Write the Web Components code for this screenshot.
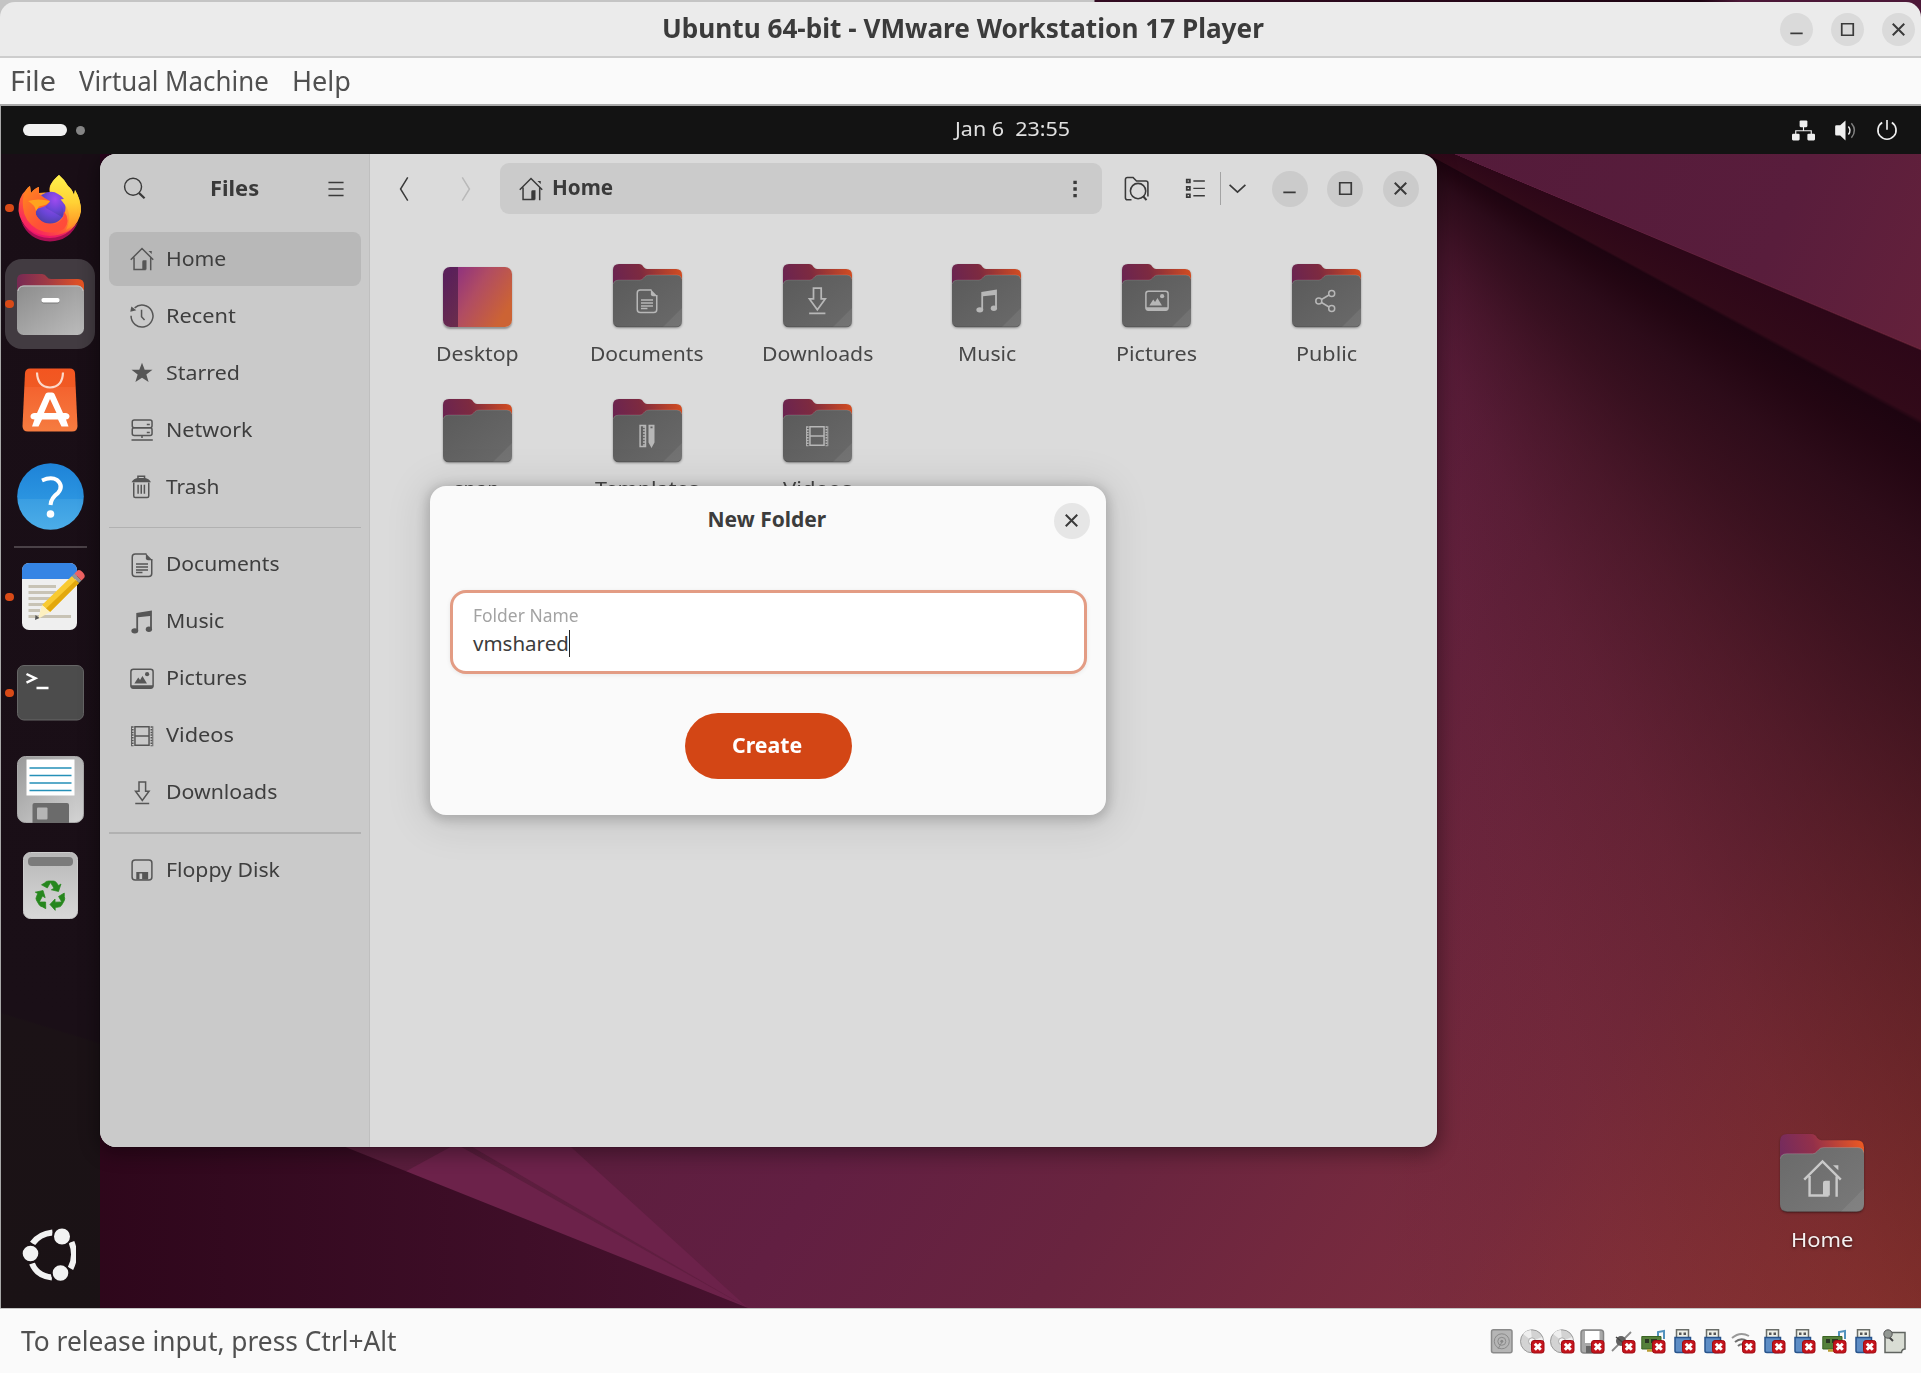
<!DOCTYPE html>
<html lang="en">
<head>
<meta charset="utf-8">
<title>Ubuntu 64-bit - VMware Workstation 17 Player</title>
<style>
html,body{margin:0;padding:0}
body{width:1921px;height:1373px;overflow:hidden;font-family:"Noto Sans","Open Sans",sans-serif;background:#fafafa}
</style>
</head>
<body>
<vm-player></vm-player>
<script>
const define = (name, html, setup) => {
  const tpl = document.createElement('template');
  customElements.define(name, class extends HTMLElement {
    constructor(){ super(); this.attachShadow({mode:'open'}); }
    connectedCallback(){
      if (this.ready) return;
      this.ready = true;
      tpl.innerHTML = typeof html === 'function' ? html(this) : html;
      this.shadowRoot.append(document.importNode(tpl.content, true));
      if (setup) setup(this);
    }
  });
};

/* Text condensed or widened to a given advance width */
define('ui-text', `<style>
:host{display:inline-block;white-space:nowrap;line-height:1.3;flex:none}
span{display:inline-block;transform-origin:0 50%;white-space:pre}
</style><span><slot></slot></span>`, el => {
  const s = el.shadowRoot.querySelector('span');
  const w = +el.getAttribute('w');
  if (w) {
    s.style.transform = `scaleX(${w / s.offsetWidth})`;
    el.style.width = w + 'px';
  }
});

/* Symbolic icons on a 16 unit grid */
const S = 'fill="none" stroke="currentColor"';
const icons = {
  home:`<path ${S} d="M.5 8.5 8 1l7.5 7.5M2.7 7v8h7.8M13.8 7.2v8.3"/><path fill="currentColor" d="M8.2 9.8q0-.9.9-.9h1.9V15H8.2zM12.3 2.6h2.2v2z"/>`,
  recent:`<path ${S} d="M.7 7.9A7.3 7.3 0 1 0 3.1 2.6M7.7 3.8v4.7l2 2.2"/><path fill="currentColor" d="M.2 5.2.9 1.6l3.3 2.5z"/>`,
  star:`<path fill="currentColor" d="m8 1.1 1.8 4.7 5.2.1-4.100 3.100 1.500 5L8 11.200l-4.400 2.800 1.500-5L1 5.900l5.200-.1z"/>`,
  network:`<g ${S}><rect x="1.5" y="1.3" width="13.2" height="5.2" rx="1.3"/><rect x="1.5" y="6.5" width="13.2" height="5.2" rx="1.3"/><path d="M1 14.7h14.2M8 11.7v1.6M11.2 4.4h2M11.2 9.6h2"/></g>`,
  trash:`<path ${S} d="M2.5 5v9q0 1 1 1h8q1 0 1-1V5M5.3 2.6V.9h4.4v1.7M5.4 6.5v6M7.5 6.5v6M9.6 6.5v6"/><path fill="currentColor" d="M1 4.9q1.5-2.6 4-2.9h5q2.5.3 4 2.9z"/>`,
  document:`<path ${S} d="M11 .6H3.5q-2 0-2 2v11q0 2 2 2h9q2 0 2-2V4M4 7.3h8M4 9.3h8M4 11.3h8M4 13h4.3"/><path fill="currentColor" d="M10.6.4 15 4.9h-3q-1.4 0-1.4-1.4z"/>`,
  music:`<path fill="currentColor" d="M4.2 2 14.6.3v12h-1.200V4l-8 .8v9.1H4.200z"/><ellipse cx="3.2" cy="13.9" rx="2.3" ry="1.8" fill="currentColor"/><ellipse cx="12.6" cy="12.8" rx="2.1" ry="1.8" fill="currentColor"/>`,
  picture:`<rect ${S} x=".6" y="1.5" width="14.8" height="12.6" rx="1.7"/><path fill="currentColor" d="M.6 12.1h14.8v1q0 1.4-1.4 1.4H2q-1.4 0-1.4-1.4zM2.9 11l2.6-4 1.2 1.6L8.300 6l3 5z"/><circle cx="11.4" cy="4.8" r="1.4" fill="currentColor"/>`,
  video:`<path ${S} d="M3.300 1.900h9.400v12.200H3.300zM3.300 8h9.400"/><path ${S} stroke-dasharray="1 .8" stroke-width="1.2" d="M1.8 1.500v13.300M14.300 1.500v13.300"/><path ${S} stroke-width=".6" d="M1 1.500v13.300M15.2 1.500v13.300"/>`,
  download:`<path ${S} d="M6 .7h4.400v6.100h2.300L8.200 13 3.700 6.800H6zM3.500 15h9.300"/>`,
  floppy:`<rect ${S} x="1.400" y="1.400" width="13.200" height="13.200" rx="2"/><path fill="currentColor" fill-rule="evenodd" d="M4.200 9.400h7.900v5H4.200zM6.300 10.300v3.700h1.800v-3.700z"/>`,
  template:`<path ${S} d="M3.400 1h3.600v14H3.400z"/><path ${S} stroke-dasharray="1 1" stroke-width="1.400" d="M6 1.500v13"/><path fill="currentColor" fill-rule="evenodd" d="M9 .5h4v11.800L11 16l-2-3.700zm1.300 1.200v1.200h1.400V1.700z"/>`,
  share:`<g ${S}><circle cx="3.200" cy="8" r="2"/><circle cx="11.800" cy="3" r="2"/><circle cx="11.800" cy="13" r="2"/><path d="m5 7 5-3M5 9l5 3"/></g>`,
  search:`<circle ${S} cx="7" cy="6.800" r="5.900"/><path ${S} stroke-width="1.500" d="m11.200 11.200 3.800 3.600"/>`,
  menu:`<path ${S} d="M2.500 3.300h11M2.500 8h11M2.500 12.700h11"/>`,
  back:`<path ${S} d="M10.500.2 5.700 8l4.800 7.800"/>`,
  forward:`<path ${S} d="M5.500.2 10.300 8l-4.800 7.800"/>`,
  dots:`<path fill="currentColor" d="M6.900 2.500h2.300v2.200H6.900zM6.900 6.900h2.300v2.200H6.900zM6.900 11.300h2.300v2.200H6.900z"/>`,
  find:`<g ${S}><path d="M4.800 15.200H2.200q-1.300 0-1.300-1.300V2.300Q.9 1 2.200 1h3.600L8 3.200h6q1.300 0 1.300 1.300v8.600"/><circle cx="9" cy="9.600" r="4.900"/><path stroke-width="1.300" d="m12.400 13.100 2 2.300"/></g>`,
  list:`<g ${S}><path stroke-width="1.200" d="M2.600 1.800h2.200v2H2.600zM2.600 6.900h2.200v2H2.600zM2.600 12h2.200v2H2.600z"/><path d="M7.200 2.800h8M7.200 7.900h8M7.200 13h8"/></g>`,
  down:`<path ${S} stroke-width="1.200" d="m2.500 5.500 5.500 5 5.500-5"/>`,
  minimize:`<path ${S} stroke-width="1.200" d="M3.700 10.700h8.600"/>`,
  maximize:`<path ${S} stroke-width="1.200" d="M4 4h8v8H4z"/>`,
  close:`<path ${S} stroke-width="1.400" d="m4 4 8 8M12 4l-8 8"/>`,
  wired:`<g fill="currentColor"><rect x="5.300" y="1" width="5.400" height="4.700" rx=".8"/><rect x="0" y="10.200" width="5.300" height="4.700" rx=".8"/><rect x="10.700" y="10.200" width="5.300" height="4.700" rx=".8"/></g><path ${S} stroke-width=".8" d="M8 5.500v2.700M2.600 10.500V8.200h10.800v2.300"/>`,
  volume:`<path fill="currentColor" d="M.8 5.300q0-.9.900-.9h2.600L8 1v14l-3.700-3.500H1.700q-.9 0-.9-.9z"/><path ${S} d="M10 5.200q2.300 2.800 0 5.600"/><path ${S} opacity=".5" d="M12.100 3q4.300 5 0 10"/>`,
  power:`<path ${S} stroke-width="1.200" d="M4.500 2.500a6.600 6.600 0 1 0 7 0M8 .8v7"/>`
};
define('ui-icon', el => `<style>:host{display:inline-flex;flex:none}svg{display:block;overflow:visible}</style>
<svg width="${el.getAttribute('size') || 24}" height="${el.getAttribute('size') || 24}" viewBox="0 0 16 16">${icons[el.getAttribute('name')]}</svg>`);

define('round-button', el => `<style>
:host{display:flex;align-items:center;justify-content:center;border-radius:50%;flex:none;width:36px;height:36px;background:#cbcbcb;color:#3a3a3a}
</style><ui-icon name="${el.getAttribute('icon')}" size="${el.getAttribute('size') || 23}"></ui-icon>`);

/* Folder with an optional emblem */
define('folder-icon', el => {
  const g = el.getAttribute('glyph'), desk = el.hasAttribute('bright');
  return `<style>:host{display:block;position:relative;width:69px;height:64px;flex:none}
svg{display:block;width:100%;height:100%;overflow:visible;filter:drop-shadow(0 1.500px 1px #0005)}
div{position:absolute;inset:11px 0 2px;display:flex;align-items:center;justify-content:center;color:${desk ? '#c9c9c9' : '#b7b7b7'}}</style>
<svg viewBox="0 0 69 64" preserveAspectRatio="none"><defs>
<linearGradient id="b" x1="0" y1=".3" x2="1" y2=".15"><stop offset="0" stop-color="${desk ? '#752b5d' : '#6b2450'}"/><stop offset=".4" stop-color="${desk ? '#93304a' : '#7d2a40'}"/><stop offset="1" stop-color="${desk ? '#ef5a22' : '#d44d20'}"/></linearGradient>
<linearGradient id="f" x1="0" y1="0" x2="1" y2="1"><stop offset="0" stop-color="${desk ? '#6a6a6a' : '#5a5a5a'}"/><stop offset="1" stop-color="${desk ? '#797979' : '#6a6a6a'}"/></linearGradient></defs>
<path fill="url(#b)" d="M0 40V6Q0 0 6 0H26Q29 0 30.500 3Q32 5 34 5H63Q69 5 69 11V40Z"/>
<path fill="url(#f)" d="M0 21Q0 16 5.500 16H27Q29 16 30.500 14L32 12.500Q33 11 36 11H64Q69 11 69 17V57Q69 63 63 63H6Q0 63 0 57Z"/>
<path fill="none" stroke="#fff" stroke-opacity=".16" stroke-width=".8" d="M.3 20Q1 16 5.500 16H27Q29 16 30.500 14L32 12.500Q33 11 36 11H64Q68 11 68.700 15"/>
<path fill="#fff" fill-opacity=".07" d="M69 44V57Q69 63 63 63H50Z"/><path fill="none" stroke="#0003" d="M2 61.500Q4 63 6 63H63Q66 63 67.500 61"/></svg>
${g ? `<div><ui-icon name="${g}" size="${el.getAttribute('gsize') || 24}"></ui-icon></div>` : ''}`;
});

define('desktop-tile', `<style>:host{display:block;width:69px;height:60px;margin-top:2.500px;margin-bottom:1.500px}
div{height:100%;border-radius:7px;background:linear-gradient(90deg,#3a163f99 15px,#0000 15px),linear-gradient(122deg,#8b2f82 10%,#b04c63 45%,#cc6334 85%);box-shadow:0 1.500px 2px #0005}</style><div></div>`);

define('file-item', el => `<style>
:host{display:flex;flex-direction:column;align-items:center;width:169.800px;height:135px;font-size:20.500px;color:#474747;flex:none}
ui-text{margin-top:11.500px}
</style><slot></slot><ui-text w="${el.getAttribute('w')}">${el.getAttribute('label')}</ui-text>`);

define('side-row', el => `<style>
:host{display:flex;align-items:center;height:54px;margin:0 8px 3px 9px;padding-left:21px;border-radius:8px;color:#565656;font-size:20.500px}
:host([active]){background:#b8b8b8}
ui-text{margin:-2px 0 0 12px;color:#3e3e3e}
</style><ui-icon name="${el.getAttribute('icon')}"></ui-icon><ui-text w="${el.getAttribute('w')}">${el.getAttribute('label')}</ui-text>`);

define('files-sidebar', `<style>
:host{display:flex;flex-direction:column;width:269px;background:#cacaca;border-right:1px solid #bfbfbf;flex:none}
header{display:flex;align-items:center;height:69px;padding:0 22px 0 23px;justify-content:space-between;margin-bottom:9px;color:#3a3a3a;font-weight:700;font-size:21px}
header ui-text{margin-left:-3px}
hr{border:0;height:1.500px;background:#b1b1b1;margin:9.500px 8px 9.500px 9px;width:252px}
</style>
<header><ui-icon name="search" size="23"></ui-icon><ui-text w="49">Files</ui-text><ui-icon name="menu" size="22"></ui-icon></header>
<side-row active icon="home" label="Home" w="60"></side-row>
<side-row icon="recent" label="Recent" w="70"></side-row>
<side-row icon="star" label="Starred" w="74"></side-row>
<side-row icon="network" label="Network" w="86"></side-row>
<side-row icon="trash" label="Trash" w="53"></side-row>
<hr>
<side-row icon="document" label="Documents" w="114"></side-row>
<side-row icon="music" label="Music" w="58"></side-row>
<side-row icon="picture" label="Pictures" w="81"></side-row>
<side-row icon="video" label="Videos" w="68"></side-row>
<side-row icon="download" label="Downloads" w="111"></side-row>
<hr>
<side-row icon="floppy" label="Floppy Disk" w="114"></side-row>`);

define('files-toolbar', `<style>
:host{display:flex;align-items:center;height:69px;color:#3a3a3a;padding-left:22px}
.fwd{color:#b9b9b9;margin-left:37.500px}
.path{display:flex;align-items:center;height:51px;width:602.500px;margin-left:22px;background:#cbcbcb;border-radius:9px;font-weight:700;font-size:21px;box-sizing:border-box;padding:0 15px 0 19px}
.path ui-text{margin:-1px auto 0 9.500px}
.find{margin-left:21.500px}.list{margin-left:34px}
i{width:1.500px;height:33px;background:#a3a3a3;margin-left:14px}
.down{margin-left:5px}
round-button{margin-left:19.600px}.first{margin-left:22.500px}
</style>
<ui-icon name="back"></ui-icon><ui-icon class="fwd" name="forward"></ui-icon>
<div class="path"><ui-icon name="home"></ui-icon><ui-text w="61">Home</ui-text><ui-icon name="dots"></ui-icon></div>
<ui-icon class="find" name="find" size="25"></ui-icon>
<ui-icon class="list" name="list" size="23"></ui-icon><i></i>
<ui-icon class="down" name="down" size="23"></ui-icon>
<round-button class="first" icon="minimize"></round-button><round-button icon="maximize"></round-button><round-button icon="close"></round-button>`);

define('files-window', `<style>
:host{display:flex;width:1337px;height:993px;border-radius:16px;overflow:hidden;background:#dbdbdb;box-shadow:0 0 0 1px #0000001a,0 4px 18px 4px #00000052}
main{flex:1;min-width:0}
.grid{display:flex;flex-wrap:wrap;padding:41px 0 0 22.600px}
</style>
<files-sidebar></files-sidebar>
<main><files-toolbar></files-toolbar>
<div class="grid">
<file-item label="Desktop" w="83"><desktop-tile></desktop-tile></file-item>
<file-item label="Documents" w="114"><folder-icon glyph="document"></folder-icon></file-item>
<file-item label="Downloads" w="111"><folder-icon glyph="download" gsize="28"></folder-icon></file-item>
<file-item label="Music" w="58"><folder-icon glyph="music"></folder-icon></file-item>
<file-item label="Pictures" w="81"><folder-icon glyph="picture"></folder-icon></file-item>
<file-item label="Public" w="61"><folder-icon glyph="share"></folder-icon></file-item>
<file-item label="snap" w="46"><folder-icon></folder-icon></file-item>
<file-item label="Templates" w="104"><folder-icon glyph="template"></folder-icon></file-item>
<file-item label="Videos" w="69"><folder-icon glyph="video"></folder-icon></file-item>
</div></main>`);

define('new-folder-dialog', `<style>
:host{display:flex;flex-direction:column;align-items:center;width:676px;height:329px;border-radius:16px;background:#fafafa;box-shadow:0 2px 12px 3px #0000002e,0 4px 40px 8px #00000017;color:#3c3c3c}
header{display:grid;grid-template-columns:1fr auto 1fr;align-items:center;width:100%;height:69px;box-sizing:border-box;padding:0 16.500px;font-weight:700;font-size:21px}
header round-button{justify-self:end;grid-column:3;background:#e6e6e6}
header ui-text{grid-column:2;margin:-1px 1px 0 -1px}
.entry{box-sizing:border-box;width:637px;height:84px;margin-top:34.500px;border:3px solid #e39c84;border-radius:16px;background:#fff;padding:11.500px 20.500px;box-shadow:0 1px 4px #00000014;font-size:20.500px;line-height:1}
.hint{font-size:17.800px;color:#a3a3a3;display:block}
.value{display:flex;align-items:center;height:28px;margin-top:2.500px}
.value i{width:1px;height:27px;background:#222}
button{all:unset;display:flex;align-items:center;justify-content:center;width:167px;height:66px;margin-top:39px;border-radius:33px;background:#d34615;color:#fff;font-weight:700;font-size:21px}
button ui-text{margin-left:-2px}
</style>
<header><ui-text w="119">New Folder</ui-text><round-button icon="close"></round-button></header>
<div class="entry"><ui-text class="hint" w="106">Folder Name</ui-text><div class="value"><ui-text w="96">vmshared</ui-text><i></i></div></div>
<button><ui-text w="70">Create</ui-text></button>`);

/* Dock launchers */
const apps = {
firefox:`<svg width="64" height="66" viewBox="0 0 64 66"><defs>
<linearGradient id="a" x1=".85" y1=".1" x2=".2" y2=".95"><stop offset="0" stop-color="#fff04a"/><stop offset=".35" stop-color="#ffb02e"/><stop offset=".65" stop-color="#ff5b36"/><stop offset="1" stop-color="#f5156c"/></linearGradient>
<radialGradient id="p" cx=".6" cy=".3" r=".75"><stop offset="0" stop-color="#a04bf0"/><stop offset=".6" stop-color="#6a45d6"/><stop offset="1" stop-color="#4d3fa5"/></radialGradient>
<linearGradient id="o" x1="0" y1="0" x2="1" y2="1"><stop offset="0" stop-color="#ff8a1c"/><stop offset=".6" stop-color="#ff5038"/><stop offset="1" stop-color="#ff4a3a"/></linearGradient>
<linearGradient id="y" x1="0" y1="0" x2="0" y2="1"><stop offset="0" stop-color="#fff24c"/><stop offset=".5" stop-color="#ffd235"/><stop offset="1" stop-color="#ff8a24"/></linearGradient></defs>
<path fill="url(#a)" d="M41 0Q47 5 50 11Q54 14 56 20L57 15Q63 25 63 36A31.500 31 0 0 1 .5 36Q0 22 8 15Q10 12 12 11L13 18Q17 13 21 12L21 18Q27 17 32 18Q29 10 41 0Z"/>
<path fill="#e5106e" opacity=".7" d="M3 46Q12 60 32 61Q51 60 60 47Q52 66 32 66.500Q11 66 3 46Z"/>
<circle cx="32" cy="33" r="15.500" fill="url(#p)"/>
<path fill="url(#y)" d="M41 0Q47 5 50 11Q54 14 56 20L57 15Q63 25 63 36Q60 49 48 55Q55 40 47 30Q42 22 33 18Q29 10 41 0Z"/>
<path fill="url(#p)" d="M24 20Q33 14 40 19Q44 21 46 24Q40 24 42 29Q48 35 44 42Q35 37 28 33Z"/>
<path fill="url(#o)" d="M8 15Q10 12 12 11L13 18Q17 13 21 12L21 19Q26 23 32 26Q30 31 22 33Q17 33 18 40Q24 51 37 49Q46 46 46 36Q53 46 46 54Q34 61 19 54Q6 46 5 32Q4 22 8 15Z"/>
<path fill="#ffa21e" d="M10 26Q20 23 32 26Q30 30 21 31.500L18 36Q17 30 10 26Z"/></svg>`,
files:`<svg width="67" height="61" viewBox="0 0 67 61"><defs><linearGradient id="a"><stop offset="0" stop-color="#772953"/><stop offset=".45" stop-color="#a03a45"/><stop offset="1" stop-color="#e95420"/></linearGradient><linearGradient id="g" x1="0" y1="0" x2="1" y2="1"><stop offset="0" stop-color="#8c8c8c"/><stop offset="1" stop-color="#bcbcbc"/></linearGradient></defs>
<path fill="url(#a)" d="M0 30V6Q0 0 6 0H25Q28 0 30 3Q31 5 34 5H61Q67 5 67 11V30Z"/><rect y="11.500" width="67" height="49.500" rx="6.500" fill="url(#g)"/><path fill="none" stroke="#c4c4c4" d="M1 17Q2 12 7 12H60Q65 12 66 17"/><rect x="24.500" y="25" width="18" height="4.500" rx="2" fill="#5558"/><rect x="24.500" y="24" width="18" height="4.500" rx="1.800" fill="#fff"/></svg>`,
store:`<svg width="56" height="64" viewBox="0 0 56 64"><defs><linearGradient id="a" x2="0" y2="1"><stop offset="0" stop-color="#f35520"/><stop offset=".29" stop-color="#f05a24"/><stop offset=".3" stop-color="#f4632f"/><stop offset="1" stop-color="#f67c40"/></linearGradient></defs>
<path fill="url(#a)" d="M3 5Q3.500 .5 8 .5H48Q52.500 .5 53 5L55.500 58Q55.500 63.500 50 63.500H6Q.5 63.500 .5 58Z"/><path fill="none" stroke="#fcd9ca" stroke-width="2.200" d="M15 4.500Q15.500 19 28 19.500Q40.500 19 41 4.500"/>
<path fill="#fff" fill-rule="evenodd" d="M23.500 26Q24 24.500 26 24.500H30Q32 24.500 32.500 26L41 45H44Q47.500 45.500 47.500 48.500Q47 51.500 44 51.500L46.500 58.500H39.500L36 51.500H20L16.500 58.500H10L12.500 51.500Q8.500 51.500 8.500 48.500Q8.500 45.500 12 45H15ZM28 31L22 45H34.500Z"/></svg>`,
help:`<svg width="67" height="67" viewBox="0 0 67 67"><defs><linearGradient id="a" x2="0" y2="1"><stop offset="0" stop-color="#1e83d8"/><stop offset=".53" stop-color="#2b94e0"/><stop offset=".54" stop-color="#3a9ee2"/><stop offset="1" stop-color="#4cade8"/></linearGradient></defs><circle cx="33.500" cy="33.500" r="33.300" fill="url(#a)"/><path fill="none" stroke="#fff" stroke-width="4" d="M25 17.500Q34 13.500 40 17Q47 23 41 30Q34 35 33.500 42"/><circle cx="33.500" cy="51" r="3.800" fill="#fff"/></svg>`,
editor:`<svg width="66" height="68" viewBox="-5 0 66 68"><defs><clipPath id="c"><rect width="55" height="67" rx="7"/></clipPath></defs><g clip-path="url(#c)"><rect width="55" height="67" fill="#efefef"/><rect width="55" height="16" fill="#3584e4"/></g><path stroke="#c8c3b5" stroke-width="2.800" d="M6.500 23.500H34M6.500 29.500H34M6.500 35.500H28M6.500 41.500H24M6.500 47.500H18M6.500 53.500H49"/><path fill="#f9ca31" d="M50 13 57 20 28 49 20 42Z"/><path fill="#e2a80d" d="m54 17 3 3-29 29-4-3.500Z"/><path fill="#fdf0c0" d="m20 42 8 7-12 7Z"/><path fill="#555" d="m13.500 52 4 3-4.500 2Z"/><path fill="#969696" d="m50 13 2.500-2.500 7 7L57 20Z"/><path fill="#ef6263" d="m52.500 10.500 2-2Q57 5.500 60.500 9Q64.500 13 61.500 15.500l-2 2Z"/></svg>`,
terminal:`<svg width="67" height="56" viewBox="0 0 67 56"><rect x=".5" y=".5" width="66" height="54.500" rx="6.500" fill="#4c4c4c" stroke="#666"/><path fill="none" stroke="#fff" stroke-width="2.400" d="m9.500 9 9 4.300-9 4.300M19.500 23h12"/></svg>`,
floppy:`<svg width="67" height="67" viewBox="0 0 67 67"><defs><linearGradient id="a" x2="1" y2="1"><stop offset="0" stop-color="#999"/><stop offset="1" stop-color="#d5d5d5"/></linearGradient></defs><rect x=".5" y=".5" width="66" height="66" rx="8" fill="url(#a)" stroke="#aaa"/><rect x="9.500" y="3.500" width="48" height="36" fill="#fff"/><path stroke="#2590b8" stroke-width="1.500" d="M12.500 12h42M12.500 19.500h42M12.500 27h42M12.500 34.500h42"/><path fill="#6b6b6b" d="M15.500 49q0-2 2-2h32.500q2 0 2 2v18H15.500z"/><rect x="20" y="51.500" width="10.500" height="12" rx="1" fill="#b5b5b5"/></svg>`,
trash:`<svg width="55" height="67" viewBox="0 0 55 67"><defs><linearGradient id="a" x2="0" y2="1"><stop offset="0" stop-color="#b8b8b8"/><stop offset="1" stop-color="#d8d8d8"/></linearGradient></defs><rect x=".5" y=".5" width="54" height="66" rx="7" fill="url(#a)" stroke="#ccc"/><rect x="5" y="5" width="45" height="9" rx="4" fill="#7b7b7b"/><g fill="#26871e" stroke="#26871e" stroke-width=".7" transform="translate(27.500 43.500)"><g id="r"><path d="M-6-12.500Q-4.500-14.500-2-14.500H3Q5-14.500 6.200-12.500L8-10 10.500-11.500 8-4 .8-5.700 3.500-7.200 0-13-3.200-7.500-9-10.700Z"/></g><use href="#r" transform="rotate(120)"/><use href="#r" transform="rotate(240)"/></g></svg>`
};
define('dock-item', el => `<style>
:host{display:flex;align-items:center;height:96px;flex:none}
.dot{width:8.500px;height:8.500px;border-radius:50%;background:#d84a17;margin-left:4px;flex:none}
.tile{display:flex;align-items:center;justify-content:center;width:90px;height:90px;border-radius:17px;margin-left:-8.300px}
:host(:not([running])) .dot{visibility:hidden}
:host([active]) .tile{background:#423b41}
:host([active]) .dot{position:relative}
svg{display:block;overflow:visible}
</style><span class="dot"></span><span class="tile">${apps[el.getAttribute('app')]}</span>`);

define('side-dock', `<style>
:host{display:flex;flex-direction:column;width:99px;box-sizing:border-box;padding-top:6px;background:linear-gradient(197deg,#190e16,#1a0f17 75%,#1b1216 75.200%,#1a1215)}
hr{border:0;width:73px;height:1.500px;background:#4a4147;margin:2px 0 1.500px 13px;flex:none}
.logo{margin:auto 0 26px 21px;display:block}
</style>
<dock-item app="firefox" running></dock-item>
<dock-item app="files" running active></dock-item>
<dock-item app="store"></dock-item>
<dock-item app="help"></dock-item>
<hr>
<dock-item app="editor" running></dock-item>
<dock-item app="terminal" running></dock-item>
<dock-item app="floppy"></dock-item>
<dock-item app="trash"></dock-item>
<svg class="logo" width="54" height="54" viewBox="0 0 54 54"><g fill="none" stroke="#f2f2f2" stroke-width="6"><path d="M10.500 15.500Q17 6 30.500 4.500M49.500 14Q55 28 48.500 40.500M30 49.500Q15 48 10 35.500"/></g><g fill="#f2f2f2" stroke="#1a1215" stroke-width="2"><circle cx="40" cy="8.500" r="9"/><circle cx="8.500" cy="25.500" r="8.800"/><circle cx="38.500" cy="45" r="8.800"/></g></svg>`);

define('top-panel', `<style>
:host{display:grid;grid-template-columns:1fr auto 1fr;align-items:center;height:48px;background:#131313;color:#efefef}
.ws{display:flex;align-items:center;gap:9px;padding-left:22px}
.ws b{width:44px;height:12.500px;border-radius:7px;background:#f2f2f2}
.ws i{width:9px;height:9px;border-radius:50%;background:#858585}
ui-text{font-size:19.800px;color:#e0e0e0;margin:-3px -51px 0 51px}
.tray{display:flex;justify-content:flex-end;align-items:center;gap:19px;padding-right:23px}
</style>
<div class="ws"><b></b><i></i></div><ui-text w="115">Jan 6  23:55</ui-text>
<div class="tray"><ui-icon name="wired" size="23"></ui-icon><ui-icon name="volume" size="23"></ui-icon><ui-icon name="power" size="22"></ui-icon></div>`);

define('guest-desktop', `<style>
:host{display:flex;flex-direction:column;height:1202px;margin-left:1px}
.area{position:relative;display:flex;flex:1;overflow:hidden;background:
conic-gradient(from 0deg at 1334px -50px,#0000 112.700deg,#2d0718 112.850deg,#320a19 118.300deg,#1d0410 118.700deg,#210511f8 122deg,#240814e0 127deg,#240812b4 135deg,#24081074 145deg,#24081038 156deg,#24081016 166deg,#0000 178deg),
linear-gradient(124deg,#511a38 0%,#591d3c 40%,#621f42 56%,#69243f 67%,#7b2c3e 82%,#a03c34 100%)}
.rays{position:absolute;inset:0}
side-dock{position:relative}
files-window{position:absolute;left:99px;top:0}
new-folder-dialog{position:absolute;left:429px;top:332px}
.home{position:absolute;left:1778.500px;top:980px;width:85px;display:flex;flex-direction:column;align-items:center;font-size:20.500px;color:#f5f0f0;text-shadow:0 1px 3px #000a}
.home folder-icon{width:84px;height:79px}
.home ui-text{margin-top:13px}
</style>
<top-panel></top-panel>
<div class="area">
<svg class="rays" width="1920" height="1154"><defs><linearGradient id="d"><stop offset="0" stop-color="#2a0518"/><stop offset="1" stop-color="#48122f"/></linearGradient><linearGradient id="u" gradientUnits="userSpaceOnUse" x1="1450" y1="0" x2="1920" y2="200"><stop offset="0" stop-color="#541b3a"/><stop offset=".65" stop-color="#591d3c"/><stop offset="1" stop-color="#64213b"/></linearGradient></defs>
<path fill="url(#u)" d="M1454 0H1920V195Z"/>
<path fill="#6c224a" d="M300 893H460L747 1154Z"/><path fill="#6c224a" d="M455 990 747 1154 400 1020Z"/>
<path fill="url(#d)" d="M0 0V1154H747L99 895V0Z"/><path fill="#29041c" d="M99 0h30v30H99z"/></svg>
<side-dock></side-dock>
<files-window></files-window>
<new-folder-dialog></new-folder-dialog>
<div class="home"><folder-icon bright glyph="home" gsize="39"></folder-icon><ui-text w="62">Home</ui-text></div>
</div>`);

/* Device indicators of the player's status bar */
const off = `<rect x="11.500" y="11.500" width="12.500" height="12.500" rx="2.500" fill="#c4141c" stroke="#9e0c14"/><path stroke="#fff" stroke-width="3" d="m14.800 14.800 6 6M20.800 14.800l-6 6"/>`;
const dev = {
hdd:`<rect x="1.500" y=".8" width="20.500" height="23" rx="2" fill="#b5b5b5" stroke="#8a8a8a" stroke-width="1.500"/><g fill="none" stroke="#8b8b8b"><circle cx="11.800" cy="12.300" r="7.500"/><circle cx="11.800" cy="12.300" r="4"/><path d="m12 13-4 7"/></g><circle cx="11.800" cy="12.300" r="1.500" fill="#888"/>`,
cd:`<circle cx="12" cy="12.300" r="11.500" fill="#d3d3d3" stroke="#999"/><path fill="#eee" d="M12 12 3 5Q6 1 11 1ZM12 12l10-4q2 4 1 7Z"/><circle cx="12" cy="12.300" r="3.500" fill="#fafafa" stroke="#aaa"/>${off}`,
fd:`<rect x="1" y="1" width="22.500" height="23" rx="3" fill="#a8a8a8" stroke="#858585" stroke-width="1.500"/><path fill="#fff" d="M5 2h14.500v12H5z"/><path fill="#666" d="M6 17h10v7H6z"/>${off}`,
net:`<path stroke="#888" stroke-width="1.800" d="M1 22 20 3"/><circle cx="10" cy="12" r="5" fill="#606060"/><path stroke="#444" stroke-width="1.500" d="m5 8 10 8"/>${off}`,
snd:`<path fill="none" stroke="#5192bd" stroke-width="2" d="M17 12V3l6-1v8"/><path fill="#55803a" stroke="#3a6423" d="M.8 7.500H20V20H.8z"/><path fill="#2b3724" d="M4 10h4v4H4zM10 10h6v4h-6z"/><path stroke="#b99d34" stroke-width="2.500" d="M6 21.500h9"/>${off}`,
usb:`<path fill="#eef0e8" stroke="#6a6d68" stroke-width="1.500" d="M5.500.8h12v8h-12z"/><path fill="#555" d="M8 3.500h2.500V6H8zM12.500 3.500H15V6h-2.500z"/><path fill="#5d8dc5" stroke="#27538c" stroke-width="1.500" d="M4 8.500h15.500V22q0 1.500-2 1.500H6Q4 23.500 4 22z"/>${off}`,
wifi:`<g fill="none" stroke="#999" stroke-width="2"><path d="M1 9Q9 2 18 7"/><path stroke="#6f6f6f" d="M4 13q6-5 12-1M7 17q3-3 7-1"/></g>${off}`,
note:`<path fill="#d9ddd4" stroke="#606460" stroke-width="1.500" d="M3 3.500h20v16.500q-3 0-3.500 3.500H3z"/><path stroke="#444" stroke-width="2" d="m6 7 5 5"/><circle cx="6" cy="5" r="4.200" fill="#929792" stroke="#555"/>`
};
define('device-icon', el => `<style>:host{display:block;width:30.150px;flex:none}svg{display:block;overflow:visible}</style><svg width="24" height="25" viewBox="0 0 24 25">${dev[el.getAttribute('kind')]}</svg>`);

define('vm-titlebar', `<style>
:host{display:grid;grid-template-columns:1fr auto 1fr;align-items:center;height:54px;margin-top:2px;background:#ebebeb;border-radius:15px 15px 0 0;border-bottom:2px solid #cdcdcd;color:#3b3b3b;font-size:27.500px;font-weight:700}
ui-text{margin:-2px -2px 0 2px}
.btns{display:flex;justify-content:flex-end;gap:18px;padding-right:6.500px}
round-button{width:33px;height:33px;background:#dadada}
</style><span></span><ui-text w="602">Ubuntu 64-bit - VMware Workstation 17 Player</ui-text>
<div class="btns"><round-button icon="minimize"></round-button><round-button icon="maximize"></round-button><round-button icon="close"></round-button></div>`);

define('vm-menubar', `<style>
:host{display:flex;align-items:center;height:46px;background:#fafafa;border-bottom:2px solid #a9a9a9;color:#505050;font-size:27.500px;padding-left:10px;gap:23px}
</style><ui-text w="46">File</ui-text><ui-text w="190">Virtual Machine</ui-text><ui-text w="59">Help</ui-text>`);

define('vm-statusbar', `<style>
:host{display:flex;align-items:center;justify-content:space-between;height:64px;background:#fafafa;border-top:1.500px solid #c4c4c4;color:#505050;font-size:27.500px;padding:0 9px 0 20.500px}
div{display:flex}
</style><ui-text w="376">To release input, press Ctrl+Alt</ui-text>
<div>${'hdd cd cd fd net snd usb usb wifi usb usb snd usb note'.split(' ').map(k => `<device-icon kind="${k}"></device-icon>`).join('')}</div>`);

define('vm-player', `<style>
:host{display:flex;flex-direction:column;width:1921px;height:1373px;background:linear-gradient(90deg,#c4c4c4 1094px,#330b22 1095px,#1d0412 1700px,#4c1838 1740px) 0 0/100% 20px no-repeat,#a8a8a8}
</style>
<vm-titlebar></vm-titlebar><vm-menubar></vm-menubar><guest-desktop></guest-desktop><vm-statusbar></vm-statusbar>`);
</script>
</body>
</html>
